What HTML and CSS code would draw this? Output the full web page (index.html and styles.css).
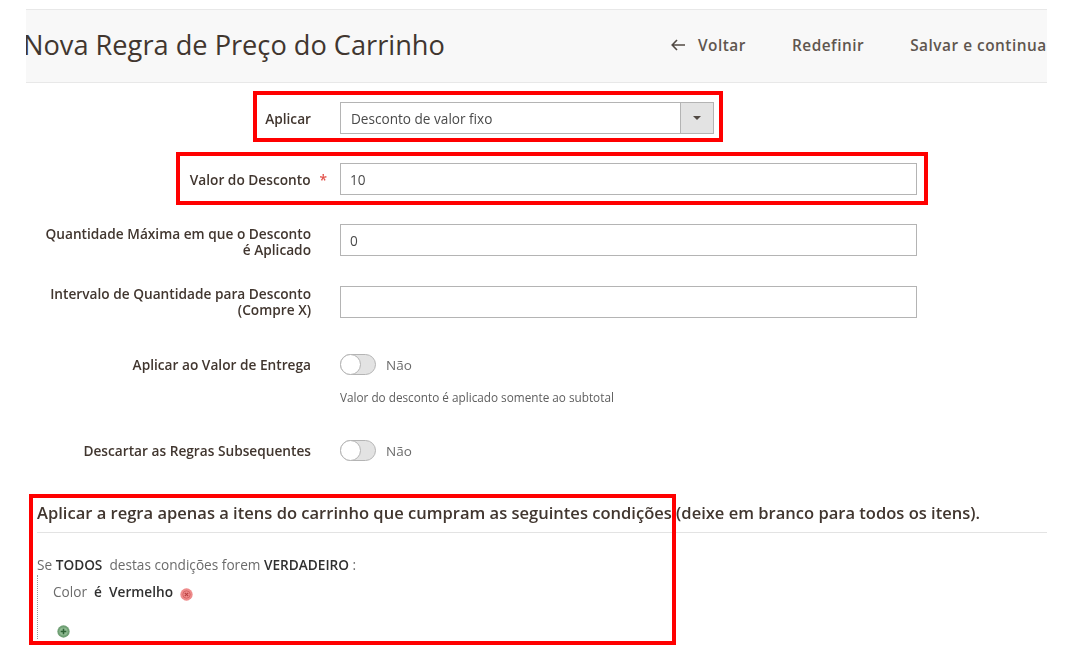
FILE: index.html
```html
<!DOCTYPE html>
<html lang="en">
<head>
    <title>Nova Regra de Preço do Carrinho</title>
    <meta charset="UTF-8">
    <link rel="stylesheet" href="styles.css">
</head>
<body>
    <div class="page">
        <div class="page_header">
            <h1>Nova Regra de Preço do Carrinho</h1>
            <div class="actions">
                <span class="action back">
                    <svg class="arrow" viewBox="0 0 14 12"><path d="M6 1L1.2 6 6 11M1.2 6H14" fill="none" stroke="#514943" stroke-width="1.6"/></svg>
                    Voltar
                </span>
                <span class="action reset">Redefinir</span>
                <span class="action save">Salvar e continua</span>
            </div>
        </div>

        <div class="form">
            <div class="row row_apply">
                <label>Aplicar</label>
                <div class="select">
                    <span class="select_value">Desconto de valor fixo</span>
                    <span class="select_btn"><span class="caret"></span></span>
                </div>
            </div>
            <div class="row row_amount">
                <label>Valor do Desconto<span class="required">*</span></label>
                <div class="input">10</div>
            </div>
            <div class="row row_qty">
                <label>Quantidade Máxima em que o Desconto é Aplicado</label>
                <div class="input">0</div>
            </div>
            <div class="row row_step">
                <label>Intervalo de Quantidade para Desconto (Compre X)</label>
                <div class="input"></div>
            </div>
            <div class="row row_ship">
                <label>Aplicar ao Valor de Entrega</label>
                <div class="toggle_wrap"><span class="toggle"></span><span class="toggle_text">Não</span></div>
            </div>
            <div class="row row_hint">
                <span></span>
                <div class="hint">Valor do desconto é aplicado somente ao subtotal</div>
            </div>
            <div class="row row_discard">
                <label>Descartar as Regras Subsequentes</label>
                <div class="toggle_wrap"><span class="toggle"></span><span class="toggle_text">Não</span></div>
            </div>
        </div>

        <div class="conditions">
            <h2>Aplicar a regra apenas a itens do carrinho que cumpram as seguintes condições (deixe em branco para todos os itens).</h2>
            <div class="rule_line">Se <b>TODOS</b> &nbsp;destas condições forem <b>VERDADEIRO</b> :</div>
            <div class="rule_tree">
                <div class="rule_item">
                    Color &nbsp;<b>é</b> &nbsp;<b>Vermelho</b>
                    <svg class="rule_icon" viewBox="0 0 12 12"><circle cx="6" cy="6" r="5.7" fill="#ee8b8b"/><circle cx="6" cy="6" r="3.4" fill="none" stroke="#cf5a5a" stroke-width=".7"/><path d="M4.4 4.4l3.2 3.2M7.6 4.4l-3.2 3.2" stroke="#b84040" stroke-width="1"/></svg>
                </div>
                <div class="rule_add">
                    <svg class="rule_icon" viewBox="0 0 12 12"><circle cx="6" cy="6" r="5.7" fill="#6f9f74"/><circle cx="6" cy="6" r="3.8" fill="#8fbb92"/><path d="M6 3.4v5.2M3.4 6h5.2" stroke="#2f6336" stroke-width="1.4"/></svg>
                </div>
            </div>
        </div>

        <!-- red marks drawn over the screen -->
        <div class="mark mark_apply"></div>
        <div class="mark mark_amount"></div>
        <div class="mark mark_rule"></div>
    </div>
</body>
</html>
```

FILE: styles.css
```css
body {
    margin: 0;
    padding: 0;
    background-color: #fff;
    font-family: 'Open Sans', 'Noto Sans', sans-serif;
    color: #41362f;
    overflow: hidden;
}

/* the reference is a soft, upscaled capture */
.page {
    position: relative;
    width: 1074px;
    height: 668px;
    padding: 9px 27px 0 26px;
    box-sizing: border-box;
    filter: blur(0.45px);
}

.page_header {
    height: 74px;
    box-sizing: border-box;
    display: flex;
    align-items: center;
    justify-content: space-between;
    background-color: #f8f8f8;
    border-top: 1px solid #e8e8e8;
    border-bottom: 1px solid #e8e8e8;
    overflow: hidden;
}

.page_header h1 {
    margin: 0 0 4px -3px;
    font-size: 27.2px;
    font-weight: 400;
    white-space: nowrap;
    color: #41362f;
}

.actions {
    display: flex;
    flex: none;
    align-items: center;
    width: 376px;
    margin-bottom: 2px;
    font-size: 15.4px;
    font-weight: 600;
    letter-spacing: 0.5px;
    color: #5f564f;
    white-space: nowrap;
}

.action {
    display: flex;
    align-items: center;
    margin-right: 46px;
}

.arrow {
    width: 14px;
    height: 12px;
    margin-right: 13px;
}

.form {
    padding-top: 19px;
}

.row {
    display: grid;
    grid-template-columns: 285px 577px;
    column-gap: 29px;
    align-items: center;
}

.row label {
    padding: 2px 0 0 15px;
    font-size: 13.7px;
    font-weight: 600;
    line-height: 16px;
    text-align: right;
    color: #41362f;
}

.row_qty label {
    margin-bottom: -2px;
}

.row_step label {
    padding-top: 0;
}

.required {
    margin-left: 9px;
    margin-right: -16px;
    color: #e2514a;
}

.select, .input {
    box-sizing: border-box;
    height: 32px;
    border: 1px solid #b4b4b4;
    background-color: #fff;
    font-size: 13.6px;
    line-height: 31px;
    padding-left: 10px;
    color: #4a4a4a;
}

.input {
    padding-left: 9px;
}

.select {
    width: 374px;
    display: flex;
    justify-content: space-between;
}

.select_btn {
    width: 32px;
    display: flex;
    align-items: center;
    justify-content: center;
    background-color: #e3e3e3;
    border-left: 1px solid #b4b4b4;
}

.caret {
    border-left: 4px solid transparent;
    border-right: 4px solid transparent;
    border-top: 4px solid #514943;
}

.row_amount { margin-top: 29px; }
.row_qty { margin-top: 29px; }
.row_step { margin-top: 30px; }
.row_ship { margin-top: 35px; }
.row_hint { margin-top: 14px; }
.row_discard { margin-top: 34px; }

.toggle_wrap {
    display: flex;
    align-items: center;
    height: 22px;
}

.toggle {
    position: relative;
    width: 36px;
    height: 21px;
    box-sizing: border-box;
    border: 1px solid #b4b4b4;
    border-radius: 11px;
    background-color: #e3e3e3;
}

.toggle::before {
    content: "";
    position: absolute;
    left: -1px;
    top: -1px;
    width: 21px;
    height: 21px;
    box-sizing: border-box;
    border: 1px solid #b4b4b4;
    border-radius: 50%;
    background-color: #fff;
}

.toggle_text {
    margin-left: 10px;
    padding-top: 2px;
    font-size: 13.5px;
    color: #6b6b6b;
}

.hint {
    font-size: 11.75px;
    line-height: 16px;
    color: #5e5e5e;
}

.conditions {
    margin-top: 42px;
    padding-left: 11px;
}

.conditions h2 {
    margin: 0;
    padding: 0 0 9px;
    border-bottom: 1px solid #e3e3e3;
    font-size: 16.55px;
    font-weight: 600;
    line-height: 20px;
    white-space: nowrap;
    color: #41362f;
}

.rule_line {
    margin-top: 23px;
    font-size: 13.65px;
    line-height: 17px;
    color: #6b6b6b;
}

.rule_line b, .rule_item b {
    font-weight: 600;
    color: #303030;
}

.rule_tree {
    height: 64px;
    padding-left: 15px;
    border-left: 1px dotted #9a9a9a;
    margin-top: 2px;
}

.rule_item {
    padding-top: 8px;
    font-size: 13.65px;
    line-height: 17px;
    color: #6b6b6b;
}

.rule_icon {
    display: inline-block;
    vertical-align: -4px;
    width: 13px;
    height: 13px;
    margin-left: 3px;
}

.rule_add {
    margin-top: 21px;
    line-height: 12px;
}

.rule_add .rule_icon {
    margin-left: 4px;
}

.mark {
    position: absolute;
    box-sizing: border-box;
    border: 4px solid #f00;
}

.mark_apply {
    left: 253px;
    top: 91px;
    width: 470px;
    height: 51px;
}

.mark_amount {
    left: 176px;
    top: 152px;
    width: 752px;
    height: 53px;
}

.mark_rule {
    left: 29px;
    top: 494px;
    width: 647px;
    height: 151px;
}
```
